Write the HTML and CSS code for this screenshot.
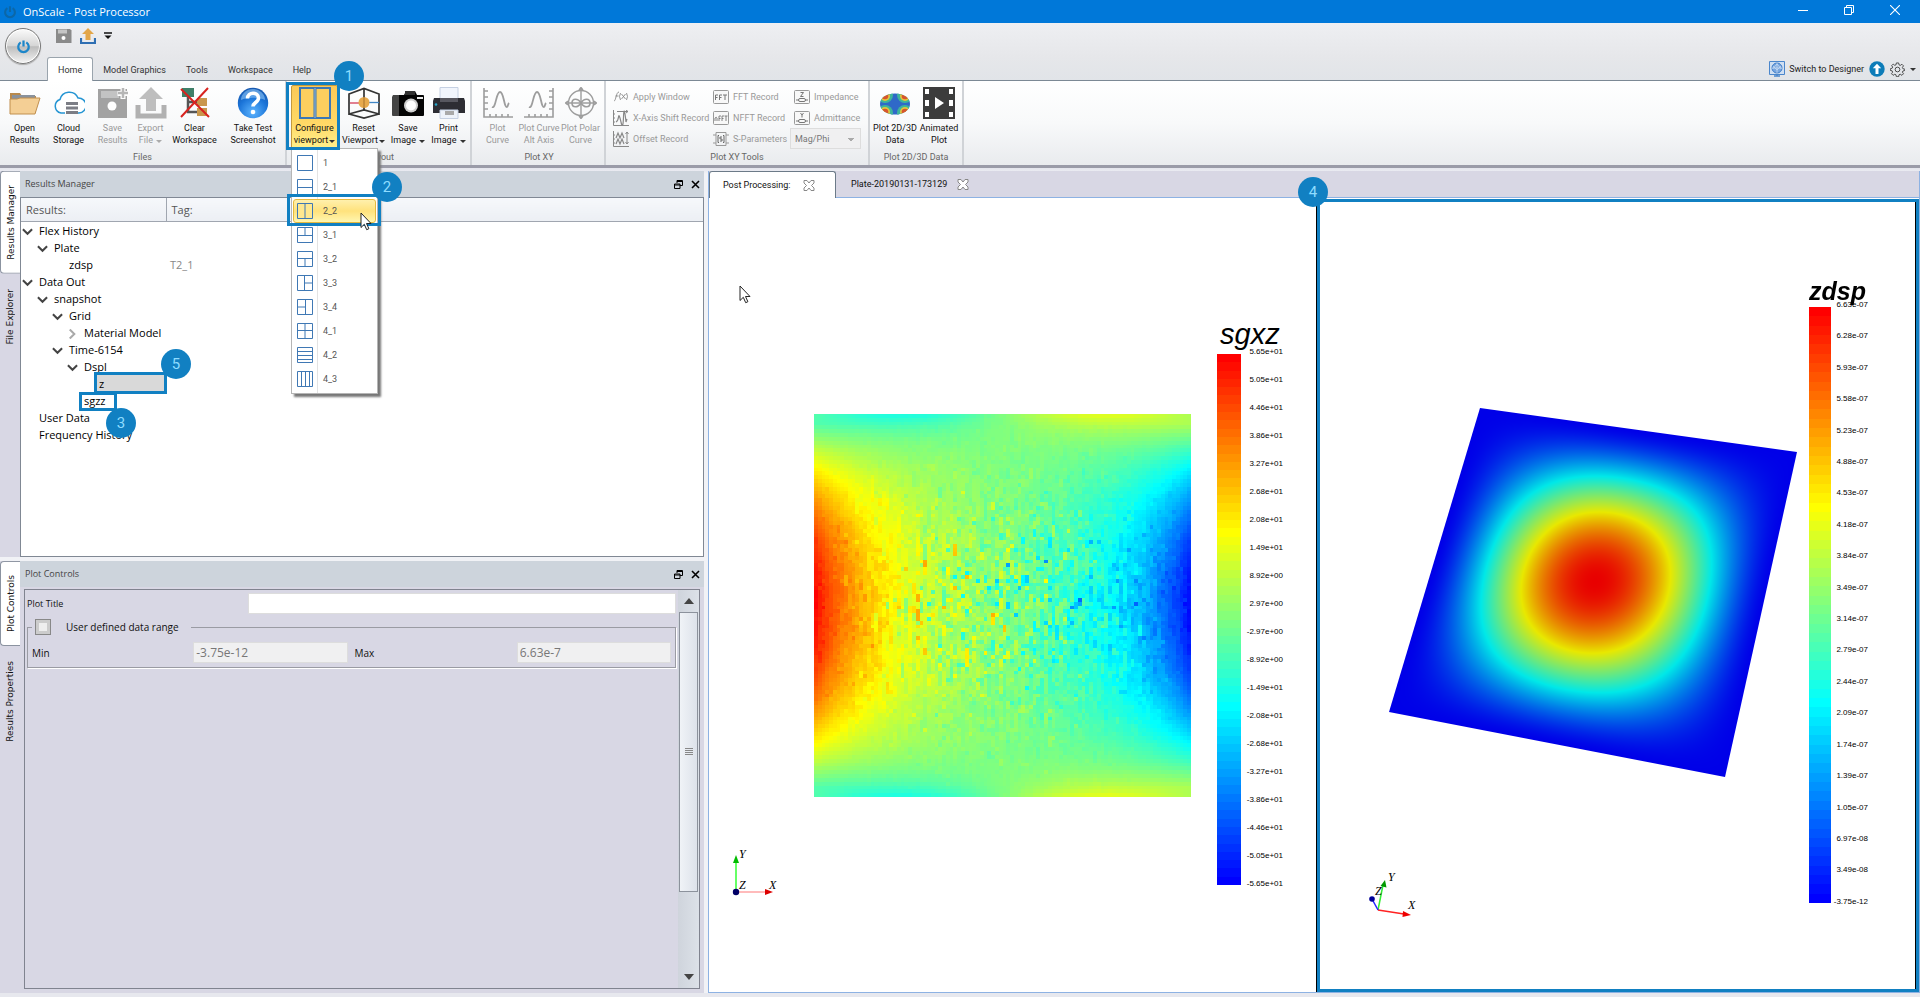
FILE: index.html
```html
<!DOCTYPE html>
<html lang="en">
<head>
<meta charset="utf-8">
<title>OnScale - Post Processor</title>
<link rel="stylesheet" href="styles.css">
</head>
<body>
<svg class="defs" aria-hidden="true">
  <defs>
    <symbol id="power" viewBox="0 0 16 16"><path d="M5 3.6a5.6 5.6 0 1 0 6 0M8 1.5v6.5" fill="none" stroke="currentColor" stroke-width="2.4"/></symbol>
    <symbol id="chev" viewBox="0 0 12 8"><path d="M1 1l5 5 5-5" fill="none" stroke="currentColor" stroke-width="2.2"/></symbol>
    <symbol id="float" viewBox="0 0 9 9"><path d="M3 3V.5h5.500v5H6M3 1.500h5.500M.5 4h5.500v4.500H.5zM.5 5h5.500" fill="none" stroke="#000"/></symbol>
    <symbol id="cross" viewBox="0 0 9 9"><path d="M1 1l7 7M8 1L1 8" fill="none" stroke="#000" stroke-width="1.6"/></symbol>
    <symbol id="tabx" viewBox="0 0 12 11"><path d="M1 .5h3l2 2.500L8 .5h3v2.500L8.500 5.500 11 8v2.500H8L6 8l-2 2.500H1V8l2.500-2.500L1 3z" fill="#fff" stroke="#888"/></symbol>
    <symbol id="pointer" viewBox="0 0 12 19"><path d="M1 1v14.500l3.300-3.200 2.400 5.400 2.200-1-2.400-5.200H11z" fill="#fff" stroke="#222"/></symbol>
  </defs>
</svg>

<header class="titlebar">
  <svg class="app-glyph" width="14" height="14"><use href="#power"/></svg>
  <h1>OnScale - Post Processor</h1>
  <button class="win" aria-label="Minimize"><svg width="10" height="10" viewBox="0 0 10 10"><path d="M0 5.500h10" stroke="#fff"/></svg></button>
  <button class="win" aria-label="Restore"><svg width="10" height="10" viewBox="0 0 10 10"><path d="M.5 2.500h7v7h-7zM2.500 2.500v-2h7v7h-2" fill="none" stroke="#fff"/></svg></button>
  <button class="win" aria-label="Close"><svg width="10" height="10" viewBox="0 0 10 10"><path d="M0 0l10 10M10 0L0 10" stroke="#fff" stroke-width="1.100"/></svg></button>
</header>

<div class="topbar">
  <button class="orb" aria-label="Application menu"><svg width="15" height="15"><use href="#power"/></svg></button>
  <div class="topbar-main">
    <div class="quick">
      <button aria-label="Save"><svg width="16" height="16" viewBox="0 0 16 16"><path d="M0 1h14l1.500 1.500V15H0z" fill="#8a8a8a"/><path d="M2 1.500h9v4H2z" fill="#c5c5c5"/><circle cx="7.500" cy="10" r="2" fill="#fff"/></svg></button>
      <button aria-label="Export"><svg width="16" height="16" viewBox="0 0 16 16"><path d="M1 10v5h14v-5" fill="none" stroke="#2f6fb3" stroke-width="2.200"/><path d="M8 0l6 6h-3.500v6h-5V6H2z" fill="#e3a648"/></svg></button>
      <button aria-label="Customize"><svg width="8" height="8" viewBox="0 0 8 8"><path d="M0 1h8" stroke="#111" stroke-width="1.500"/><path d="M.5 3.500h7L4 7z" fill="#111"/></svg></button>
    </div>
    <nav class="tabs">
      <button class="tab on">Home</button><button class="tab">Model Graphics</button><button class="tab">Tools</button><button class="tab">Workspace</button><button class="tab">Help</button>
      <div class="tools-right">
        <button class="switch"><svg width="16" height="16" viewBox="0 0 16 16"><path d="M.5.5h15v13H.5z" fill="#cfdff2" stroke="#4a86cc"/><circle cx="8" cy="7" r="5" fill="#78a6df" stroke="#3d7cc8"/><path d="M4 5l4 4 4-4M3.500 8L8 3l4.500 5M8 2v10M3 7h10" stroke="#cfe0f5" stroke-width=".7" fill="none"/><path d="M5 15h6M8 13v2" stroke="#4a86cc" stroke-width="1.500"/></svg><span>Switch to Designer</span></button>
        <button aria-label="Update"><svg width="16" height="16" viewBox="0 0 16 16"><circle cx="8" cy="8" r="7.700" fill="#0d7cb8"/><path d="M8 2.800l4.200 4.500H9.500V13h-3V7.300H3.800z" fill="#fff"/></svg></button>
        <button class="gear" aria-label="Settings"><svg width="15" height="15" viewBox="0 0 16 16"><path d="M6.800 1h2.400l.4 2 1.400.6 1.700-1.200 1.700 1.700-1.200 1.700.6 1.400 2 .4v1.400l-2 .6-.6 1.200 1.200 1.700-1.700 1.700-1.700-1.100-1.400.5-.4 2.100H6.800l-.4-2-1.400-.6-1.700 1.100-1.700-1.700 1.200-1.700-.6-1.400-1.900-.4V7.200l2-.6.6-1.200L1.700 3.900l1.700-1.700L5 3.500 6.400 3z" fill="none" stroke="#444"/><circle cx="8" cy="8" r="2.500" fill="none" stroke="#444"/></svg><i class="caret"></i></button>
      </div>
    </nav>
  </div>
</div>

<section class="ribbon">
  <div class="group">
    <div class="buttons">
      <button class="big w45"><svg width="32" height="32" viewBox="0 0 32 32"><path d="M1 6h10l2 3h14v17H1z" fill="#b98a4c"/><path d="M3 8h23v8H3z" fill="#8a929c"/><path d="M1 27V12h7l3-1h20l-5 16z" fill="#f4cf95" stroke="#c08f4f"/></svg><span>Open<br>Results</span></button>
      <button class="big w43"><svg width="32" height="32" viewBox="0 0 32 32"><path d="M12 26H8a7 7 0 0 1-1-13.500A9.500 9.500 0 0 1 25 11a7.500 7.500 0 0 1 1 15h-1" fill="#fff" stroke="#2595d3" stroke-width="1.500"/><path d="M13 15h12v3H13zM13 19.500h12v3H13zM13 24h12v3H13z" fill="#7b7d85"/></svg><span>Cloud<br>Storage</span></button>
      <button class="big w45 off"><svg width="32" height="32" viewBox="0 0 32 32"><path d="M1 2h29v29H1z" fill="#939393"/><path d="M4 4h18v7H4z" fill="#b9b9b9"/><circle cx="15" cy="19" r="4.500" fill="#fff"/><path d="M26 1v11M20.500 6.500h11" stroke="#fff" stroke-width="5"/><path d="M26 1v10M21 6h10" stroke="#aaa" stroke-width="2.500"/></svg><span>Save<br>Results</span></button>
      <button class="big w31 off"><svg width="32" height="32" viewBox="0 0 32 32"><path d="M3 18v11h26V18" fill="none" stroke="#a5a5a5" stroke-width="5"/><path d="M16 0l12 12h-7v12H11V12H4z" fill="#b4b4b4"/></svg><span>Export<br>File <i class="caret"></i></span></button>
      <button class="big w57"><svg width="32" height="32" viewBox="0 0 32 32"><path d="M9 6v19h12M9 15h10" fill="none" stroke="#555" stroke-width="2.500"/><path d="M3 1h12v9H3z" fill="#3f7f68"/><path d="M18 11h10v8H18zM18 21h10v8H18z" fill="#c9974c"/><path d="M2 2l28 28M29 1L2 30" stroke="#d8231f" stroke-width="2"/></svg><span>Clear<br>Workspace</span></button>
      <button class="big w60"><svg width="32" height="32" viewBox="0 0 32 32"><defs><radialGradient id="hb" cx=".5" cy=".8" r=".8"><stop offset="0" stop-color="#5cb4ff"/><stop offset=".6" stop-color="#1b74d8"/><stop offset="1" stop-color="#1657ad"/></radialGradient></defs><circle cx="16" cy="16" r="15.200" fill="url(#hb)"/><path d="M4 13a12 11 0 0 1 24 0c-6-3-18-3-24 0z" fill="#8cc4f7" opacity=".6"/><path d="M10.500 11.500c0-7 11-7 11-.5 0 4.500-5.500 4.500-5.500 8.500" fill="none" stroke="#fff" stroke-width="3.600"/><circle cx="16" cy="25" r="2.300" fill="#fff"/></svg><span>Take Test<br>Screenshot</span></button>
    </div>
    <h2>Files</h2>
  </div>

  <div class="group layout">
    <div class="buttons">
      <div class="menu-host">
        <button class="big w47 hot"><svg width="32" height="32" viewBox="0 0 32 32"><path d="M1 1h30v30H1z" fill="#fccf5f" stroke="#3c77b5" stroke-width="2"/><path d="M16 1v30" stroke="#3c77b5" stroke-width="3"/><path d="M16 1v30" stroke="#9dbbd0"/></svg><span>Configure<br>viewport<i class="caret"></i></span></button>
        <div class="frame frame-1"></div>
        <ul class="menu">
          <li><button><svg width="16" height="16" viewBox="0 0 16 16"><path d="M.5.5h15v15H.5z"/></svg>1</button></li>
          <li><button><svg width="16" height="16" viewBox="0 0 16 16"><path d="M.5.5h15v15H.5zM0 8.500h16"/></svg>2_1</button></li>
          <li class="picked"><button><svg width="16" height="16" viewBox="0 0 16 16"><path d="M.5.5h15v15H.5zM8 0v16"/></svg>2_2</button>
            <div class="frame frame-2"></div><span class="badge badge-2">2</span>
            <svg class="pointer-menu" width="12" height="19"><use href="#pointer"/></svg></li>
          <li><button><svg width="16" height="16" viewBox="0 0 16 16"><path d="M.5.5h15v15H.5zM0 8.500h16M8 0v8"/></svg>3_1</button></li>
          <li><button><svg width="16" height="16" viewBox="0 0 16 16"><path d="M.5.5h15v15H.5zM0 7.500h16M8 8v8"/></svg>3_2</button></li>
          <li><button><svg width="16" height="16" viewBox="0 0 16 16"><path d="M.5.5h15v15H.5zM7.500 0v16M8 8h8"/></svg>3_3</button></li>
          <li><button><svg width="16" height="16" viewBox="0 0 16 16"><path d="M.5.5h15v15H.5zM8.500 0v16M0 8h8"/></svg>3_4</button></li>
          <li><button><svg width="16" height="16" viewBox="0 0 16 16"><path d="M.5.5h15v15H.5zM8 0v16M0 7.500h16"/></svg>4_1</button></li>
          <li><button><svg width="16" height="16" viewBox="0 0 16 16"><path d="M.5.5h15v15H.5zM0 4.500h16M0 8.500h16M0 12.500h16"/></svg>4_2</button></li>
          <li><button><svg width="16" height="16" viewBox="0 0 16 16"><path d="M.5.5h15v15H.5zM4.500 0v16M8.500 0v16M12.500 0v16"/></svg>4_3</button></li>
        </ul>
        <span class="badge badge-1">1</span>
      </div>
      <button class="big w51"><svg width="32" height="32" viewBox="0 0 32 32"><path d="M1 7L16 1.500 31 7v20l-15-4-15 4zM1 27l15 4 15-4M16 1.500V23" fill="none" stroke="#333" stroke-width="1.700"/><path d="M2 16h9" stroke="#d33b55" stroke-width="1.300"/><path d="M21 15.500h10" stroke="#3f86c6" stroke-width="1.300"/><circle cx="16" cy="15.500" r="5.500" fill="#e7aa4e"/><path d="M16 10v11" stroke="#a5702a"/></svg><span>Reset<br>Viewport<i class="caret"></i></span></button>
      <button class="big w38"><svg width="32" height="32" viewBox="0 0 32 32"><path d="M1 8h6v21H1a1 1 0 0 1-1-1V10z" fill="#444"/><path d="M7 8h5l2-4h9l2 4h6a1 1 0 0 1 1 1v19a1 1 0 0 1-1 1H7z" fill="#050505"/><path d="M13 4h10v4H13z" fill="#333"/><path d="M25 10h6v2h-6z" fill="#eee"/><circle cx="19" cy="18.500" r="7" fill="#cfcfcf"/><circle cx="19" cy="18.500" r="5" fill="#fff"/></svg><span>Save<br>Image <i class="caret"></i></span></button>
      <button class="big w43"><svg width="32" height="32" viewBox="0 0 32 32"><path d="M7 .5h18V13H7z" fill="#f1f5fc" stroke="#c5d0e2"/><path d="M1 11h30l1 3v12H0V14z" fill="#2d2d33"/><path d="M7 11h18v4H7z" fill="#57575f"/><circle cx="3" cy="17.500" r="1.300" fill="#26a5c8"/><path d="M7 23h18v8.500H7z" fill="#edf2fa" stroke="#c5d0e2"/><path d="M12 24h9v4h-9z" fill="#a9a9a9"/></svg><span>Print<br>Image <i class="caret"></i></span></button>
    </div>
    <h2>Layout</h2>
  </div>

  <div class="group xy">
    <div class="buttons">
      <button class="big w43 off"><svg width="32" height="32" viewBox="0 0 32 32"><path d="M2 1v29h29M2 4h4M2 10h4M2 16h4M2 22h4M8 30v-3M14 30v-3M20 30v-3M26 30v-3" fill="none" stroke="#8d8d8d" stroke-width="1.600"/><path d="M10 20c4 2 4-15 8-15s4 16 7 15c1-.5 1-3 2-4" fill="none" stroke="#8d8d8d" stroke-width="1.800"/></svg><span>Plot<br>Curve</span></button>
      <button class="big w40 off"><svg width="32" height="32" viewBox="0 0 32 32"><path d="M30 1v29H1M30 4h-4M30 10h-4M30 16h-4M30 22h-4M24 30v-3M18 30v-3M12 30v-3M6 30v-3" fill="none" stroke="#8d8d8d" stroke-width="1.600"/><path d="M6 20c4 2 4-15 8-15s4 16 7 15c1-.5 1-3 2-4" fill="none" stroke="#8d8d8d" stroke-width="1.800"/></svg><span>Plot Curve<br>Alt Axis</span></button>
      <button class="big w43 off"><svg width="32" height="32" viewBox="0 0 32 32"><circle cx="16" cy="16" r="12.500" fill="none" stroke="#8d8d8d" stroke-width="1.400"/><path d="M16 1v30M1 16h30M14 3l2-2.500L18 3M14 29l2 2.500 2-2.500M3 14L.5 16 3 18M29 14l2.500 2-2.500 2" fill="none" stroke="#8d8d8d" stroke-width="1.400"/><path d="M16 16c-3-5-9-5-9 0s6 5 9 0 9-5 9 0-6 5-9 0z" fill="none" stroke="#8d8d8d" stroke-width="1.600"/></svg><span>Plot Polar<br>Curve</span></button>
    </div>
    <h2>Plot XY</h2>
  </div>

  <div class="group">
    <div class="small-grid">
      <button class="small"><svg width="16" height="16" viewBox="0 0 16 16"><path d="M1 12c2 0 2-9 5-9M2.500 7h3M7.500 4q-2 3.500 0 7M13.500 4q2 3.500 0 7M8.500 5l4 5M12.500 5l-4 5" fill="none" stroke="#888" stroke-width=".9"/></svg>Apply Window</button>
      <button class="small"><svg width="16" height="16" viewBox="0 0 16 16"><rect x=".5" y="1.500" width="15" height="13" rx="1" fill="#f8f8f8" stroke="#999"/><path d="M2.500 11V6h2.500M2.500 8.500h2M6.500 11V6H9M6.500 8.500h2M10 6h4M12 6v5" fill="none" stroke="#777"/></svg>FFT Record</button>
      <button class="small"><svg width="16" height="16" viewBox="0 0 16 16"><rect x=".5" y="1.500" width="15" height="13" rx="1" fill="#f8f8f8" stroke="#999"/><path d="M6.500 3.500h3l-3 4h3M2 11h3M11 11h3" fill="none" stroke="#777"/><rect x="4.500" y="9.500" width="7" height="3" rx="1.500" fill="none" stroke="#777"/></svg>Impedance</button>
      <button class="small"><svg width="16" height="16" viewBox="0 0 16 16"><path d="M.5 0v15.500H16M.5 4H2M.5 8H2M.5 12H2M4 1.500h11M13 0l2 1.500L13 3" fill="none" stroke="#888"/><path d="M3 12q2-1 2.500-5T8 12t2.500-5T13 12l1-3" fill="none" stroke="#888" stroke-width="1.200"/></svg>X-Axis Shift Record</button>
      <button class="small"><svg width="16" height="16" viewBox="0 0 16 16"><rect x=".5" y="1.500" width="15" height="13" rx="1" fill="#f8f8f8" stroke="#999"/><path d="M2 11V8q1.500-1.500 2 0v3M6 11V6h2M6 8.500h1.500M9 11V6h2M9 8.500h1.500M11.500 6h3M13 6v5" fill="none" stroke="#777" stroke-width=".9"/></svg>NFFT Record</button>
      <button class="small"><svg width="16" height="16" viewBox="0 0 16 16"><rect x=".5" y="1.500" width="15" height="13" rx="1" fill="#f8f8f8" stroke="#999"/><path d="M6.500 3l1.500 2 1.500-2M8 5v2.500M2 11h3M11 11h3" fill="none" stroke="#777"/><rect x="4.500" y="9.500" width="7" height="3" rx="1.500" fill="none" stroke="#777"/></svg>Admittance</button>
      <button class="small"><svg width="16" height="16" viewBox="0 0 16 16"><path d="M.5 0v15.500H16M.5 4H2M.5 8H2M.5 12H2M14 1v12M12.500 3L14 1l1.500 2M12.500 11l1.500 2 1.500-2" fill="none" stroke="#888"/><path d="M3 7l2-5 2 5 2-5 2 5M3 13l2-5 2 5 2-5 2 5" fill="none" stroke="#888" stroke-width="1.200"/></svg>Offset Record</button>
      <button class="small"><svg width="16" height="16" viewBox="0 0 16 16"><path d="M3 1.500h10v13H3zM0 4h3M0 12h3M13 4h3M13 12h3" fill="none" stroke="#999"/><path d="M6 4.500H5v7h1M10 4.500h1v7h-1M9 6H7v2h2v2H7" fill="none" stroke="#666"/></svg>S-Parameters</button>
      <select class="mag" disabled aria-label="Output format"><option>Mag/Phi</option></select>
    </div>
    <h2>Plot XY Tools</h2>
  </div>

  <div class="group last">
    <div class="buttons">
      <button class="big w46"><svg width="32" height="32" viewBox="0 0 32 32"><clipPath id="ov"><ellipse cx="16" cy="17" rx="15" ry="10.500"/></clipPath><g clip-path="url(#ov)"><path d="M0 5h32v24H0z" fill="#2f69c8"/><g fill="#3fb59b"><circle cx="6" cy="8" r="8"/><circle cx="26" cy="8" r="8"/><circle cx="6" cy="26" r="8"/><circle cx="26" cy="26" r="8"/></g><g fill="#e2c53c"><circle cx="6" cy="9" r="5"/><circle cx="26" cy="9" r="5"/><circle cx="6" cy="25" r="5"/><circle cx="26" cy="25" r="5"/></g><g fill="#d8542f"><circle cx="6" cy="9" r="3.300"/><circle cx="26" cy="9" r="3.300"/><circle cx="6" cy="25" r="3.300"/><circle cx="26" cy="25" r="3.300"/></g></g></svg><span>Plot 2D/3D<br>Data</span></button>
      <button class="big w42"><svg width="32" height="32" viewBox="0 0 32 32"><path d="M0 0h32v32H0z" fill="#3c3c3c"/><path d="M2 2h4v5H2zM2 13h4v6H2zM2 25h4v5H2zM26 2h4v5h-4zM26 13h4v6h-4zM26 25h4v5h-4zM12 10l9 6-9 6z" fill="#fff"/></svg><span>Animated<br>Plot</span></button>
    </div>
    <h2>Plot 2D/3D Data</h2>
  </div>
</section>

<main class="work">
  <div class="left">
    <section class="dock results">
      <nav class="side"><button class="vtab on">Results Manager</button><button class="vtab">File Explorer</button></nav>
      <div class="pane">
        <header class="pane-head"><h2>Results Manager</h2><button aria-label="Float"><svg width="9" height="9"><use href="#float"/></svg></button><button aria-label="Close"><svg width="9" height="9"><use href="#cross"/></svg></button></header>
        <div class="tree-box">
          <table class="tree">
            <thead><tr><th class="c-res">Results:</th><th>Tag:</th></tr></thead>
            <tbody>
              <tr><td class="l0"><svg class="tw" width="11" height="8"><use href="#chev"/></svg>Flex History</td><td></td></tr>
              <tr><td class="l1"><svg class="tw" width="11" height="8"><use href="#chev"/></svg>Plate</td><td></td></tr>
              <tr><td class="l2 leaf">zdsp</td><td class="tag">T2_1</td></tr>
              <tr><td class="l0"><svg class="tw" width="11" height="8"><use href="#chev"/></svg>Data Out</td><td></td></tr>
              <tr><td class="l1"><svg class="tw" width="11" height="8"><use href="#chev"/></svg>snapshot</td><td></td></tr>
              <tr><td class="l2"><svg class="tw" width="11" height="8"><use href="#chev"/></svg>Grid</td><td></td></tr>
              <tr><td class="l3"><svg class="tw shut" width="11" height="8"><use href="#chev"/></svg>Material Model</td><td></td></tr>
              <tr><td class="l2"><svg class="tw" width="11" height="8"><use href="#chev"/></svg>Time-6154</td><td></td></tr>
              <tr><td class="l3"><svg class="tw" width="11" height="8"><use href="#chev"/></svg>Dspl</td><td></td></tr>
              <tr><td class="l4 leaf"><div class="frame frame-5"></div><span class="over">z</span><span class="badge badge-5">5</span></td><td></td></tr>
              <tr><td class="l3 leaf"><div class="frame frame-3"></div><span class="over">sgzz</span><span class="badge badge-3">3</span></td><td></td></tr>
              <tr><td class="l0 leaf">User Data</td><td></td></tr>
              <tr><td class="l0 leaf">Frequency History</td><td></td></tr>
            </tbody>
          </table>
        </div>
      </div>
    </section>

    <section class="dock controls">
      <nav class="side"><button class="vtab on">Plot Controls</button><button class="vtab">Results Properties</button></nav>
      <div class="pane">
        <header class="pane-head"><h2>Plot Controls</h2><button aria-label="Float"><svg width="9" height="9"><use href="#float"/></svg></button><button aria-label="Close"><svg width="9" height="9"><use href="#cross"/></svg></button></header>
        <div class="form-box">
          <form class="form">
            <div class="title-row"><label for="ptitle">Plot Title</label><input id="ptitle" type="text"></div>
            <fieldset>
              <legend><input id="udr" type="checkbox"><label for="udr">User defined data range</label></legend>
              <div class="range"><label for="mn">Min</label><input id="mn" disabled value="-3.75e-12"><label for="mx">Max</label><input id="mx" disabled value="6.63e-7"></div>
            </fieldset>
          </form>
          <div class="scroll">
            <svg width="10" height="6" viewBox="0 0 10 6"><path d="M0 6l5-6 5 6z" fill="#444"/></svg>
            <div class="track"><div class="thumb"><i></i></div></div>
            <svg width="10" height="6" viewBox="0 0 10 6"><path d="M0 0l5 6 5-6z" fill="#444"/></svg>
          </div>
        </div>
      </div>
    </section>
  </div>

  <section class="docs">
    <nav class="doc-tabs">
      <button class="doc on">Post Processing:<svg width="12" height="11"><use href="#tabx"/></svg></button>
      <button class="doc">Plate-20190131-173129<svg width="12" height="11"><use href="#tabx"/></svg></button>
    </nav>
    <div class="views">
      <div class="view">
        <svg class="pointer-view" width="12" height="19"><use href="#pointer"/></svg>
        <canvas class="heat" id="heat" width="100" height="100"></canvas>
        <div class="scale scale-1">
          <h3>sgxz</h3>
          <canvas class="bar" width="1" height="64"></canvas>
          <ol><li>5.65e+01</li><li>5.05e+01</li><li>4.46e+01</li><li>3.86e+01</li><li>3.27e+01</li><li>2.68e+01</li><li>2.08e+01</li><li>1.49e+01</li><li>8.92e+00</li><li>2.97e+00</li><li>-2.97e+00</li><li>-8.92e+00</li><li>-1.49e+01</li><li>-2.08e+01</li><li>-2.68e+01</li><li>-3.27e+01</li><li>-3.86e+01</li><li>-4.46e+01</li><li>-5.05e+01</li><li>-5.65e+01</li></ol>
        </div>
        <svg class="triad triad-1" width="60" height="60" viewBox="0 0 60 60">
          <path d="M10 46V16" stroke="#3f3" stroke-width="1.500"/><path d="M7 17l3-8 3 8z" fill="#0b0"/>
          <path d="M10 46h30" stroke="#fbb" stroke-width="2"/><path d="M39 43l8 3-8 3z" fill="#d00"/><circle cx="10" cy="46" r="3.200" fill="#006"/>
          <text x="13" y="12">Y</text><text x="13" y="43">Z</text><text x="43" y="43">X</text>
        </svg>
      </div>
      <div class="view active">
        <canvas class="plate" id="plate" width="409" height="370"></canvas>
        <div class="scale scale-2">
          <h3>zdsp</h3>
          <canvas class="bar" width="1" height="64"></canvas>
          <ol><li>6.63e-07</li><li>6.28e-07</li><li>5.93e-07</li><li>5.58e-07</li><li>5.23e-07</li><li>4.88e-07</li><li>4.53e-07</li><li>4.18e-07</li><li>3.84e-07</li><li>3.49e-07</li><li>3.14e-07</li><li>2.79e-07</li><li>2.44e-07</li><li>2.09e-07</li><li>1.74e-07</li><li>1.39e-07</li><li>1.05e-07</li><li>6.97e-08</li><li>3.49e-08</li><li>-3.75e-12</li></ol>
        </div>
        <svg class="triad triad-2" width="60" height="60" viewBox="0 0 60 60">
          <path d="M13 40l5-25" stroke="#3e3" stroke-width="1.500"/><path d="M15.500 16L20 10l1.500 7.500z" fill="#090"/>
          <path d="M13 40l26 4" stroke="#f22" stroke-width="1.500"/><path d="M38 41l8 4-8.500 2z" fill="#e00"/>
          <path d="M13 40L7 29" stroke="#22f" stroke-width="1.500"/><circle cx="7" cy="29" r="2.800" fill="#009"/>
          <text x="10" y="25">Z</text><text x="23" y="11">Y</text><text x="43" y="39">X</text>
        </svg>
        <div class="frame frame-4"></div><span class="badge badge-4">4</span>
      </div>
    </div>
  </section>
</main>
<script src="plots.js"></script>
</body>
</html>
```
FILE: styles.css
```css
* { box-sizing: border-box; }
html, body { height: 100%; margin: 0; }
body {
  display: flex; flex-direction: column; overflow: hidden;
  font-family: Roboto, "Liberation Sans", sans-serif; font-size: 9px; line-height: 12px; color: #111;
  background: #e7e8ee;
}
.defs { position: absolute; width: 0; height: 0; }
button { font: inherit; color: inherit; background: none; border: 0; padding: 0; margin: 0; }
h1, h2, h3, ol, ul { margin: 0; padding: 0; font-weight: normal; list-style: none; }
svg { display: block; flex: none; }

.titlebar { display: flex; align-items: center; height: 23px; flex: none; background: #0078d9; color: #fff; padding-left: 3px; }
.app-glyph { color: #0b67a8; }
.titlebar h1 { flex: 1; padding-left: 6px; font: 11px/16px "Open Sans", sans-serif; }
.win { width: 46px; height: 23px; display: grid; place-items: center; padding-right: 4px; padding-bottom: 3px; }

.topbar { display: flex; flex: none; height: 58px; background: linear-gradient(#eeeff2, #e6e7ea 60%, #e1e4e8); border-bottom: 1px solid #7c8995; }
.orb {
  width: 36px; height: 36px; margin: 5px 6px 0 5px; border-radius: 50%; border: 1px solid #777;
  display: grid; place-items: center; color: #1d86c9;
  background: linear-gradient(#fbfbfb, #d5d5d5 50%, #bcbcbc 52%, #f4f4f4); box-shadow: inset 0 0 0 1px #fff, 0 1px 1px #aaa;
}
.topbar-main { flex: 1; display: flex; flex-direction: column; justify-content: space-between; }
.quick { display: flex; gap: 8px; align-items: center; padding: 5px 0 0 9px; }
.tabs { display: flex; align-items: flex-end; height: 24px; margin-bottom: -1px; }
.tab { height: 24px; padding: 0 9px; color: #333; font: 9px/22px Roboto, sans-serif; border: 1px solid transparent; border-bottom: 0; }
.tab.on { padding: 0 10px; background: #fff; border-color: #9aa4ad; border-radius: 3px 3px 0 0; }
.tools-right { margin-left: auto; display: flex; align-items: center; gap: 5px; height: 24px; padding-right: 4px; color: #222; }
.switch, .gear { display: flex; align-items: center; gap: 4px; }
.caret { display: inline-block; border: 3px solid transparent; border-top-color: #333; border-bottom: 0; margin-left: 1px; }

.ribbon { display: flex; flex: none; height: 87px; background: linear-gradient(#fff, #f8f9fa 50%, #e9ebee); border-bottom: 3px solid #9a9ba8; }
.group { display: flex; flex-direction: column; justify-content: space-between; border-right: 2px solid #d0d3d7; padding: 4px 2px 2px; }
.group.layout { padding-left: 4px; padding-right: 0; }
.group.xy { padding-left: 4px; }
.group h2 { text-align: center; color: #666; font-size: 9px; }
.buttons { display: flex; height: 64px; }
.big { display: flex; flex-direction: column; align-items: center; gap: 3px; height: 64px; padding-top: 2px; text-align: center; white-space: nowrap; }
.off, .small { color: #999; }
.off svg { opacity: .85; }
.off .caret { border-top-color: #aaa; }
.w31 { width: 31px; } .w38 { width: 38px; } .w40 { width: 40px; } .w42 { width: 42px; } .w43 { width: 43px; }
.w45 { width: 45px; } .w46 { width: 46px; } .w47 { width: 47px; } .w51 { width: 51px; } .w57 { width: 57px; } .w60 { width: 60px; }
.hot { background: linear-gradient(#fbc957, #ffd966 60%, #fff08c); border: 1px solid #c59a3c; border-radius: 2px; padding-top: 1px; }
.menu-host { position: relative; z-index: 5; }

.menu { position: absolute; left: 0; top: 63px; width: 87px; padding: 2px 1px; border: 1px solid #b5b5b5; background: linear-gradient(90deg, #fff 25px, #e3e3e3 25px, #e3e3e3 26px, #fff 26px); box-shadow: 3px 3px 2px #777; }
.menu li { position: relative; height: 24px; }
.menu button { display: flex; align-items: center; gap: 10px; width: 100%; height: 24px; padding-left: 3px; color: #555; font-size: 9px; border: 1px solid transparent; border-radius: 3px; }
.menu svg path { fill: #fff; stroke: #3f78b4; }
.menu .picked button { border-color: #e6b93c; background: linear-gradient(#fff0ad, #ffe27c 50%, #fff6b0); }
.menu .picked button path { fill: #ffe88f; }
.menu .pointer-menu { position: absolute; left: 67px; top: 13px; z-index: 3; }

.small-grid { display: grid; grid-template-columns: 100px 81px 74px; grid-auto-rows: 21px; padding: 1px 0 0 5px; width: 258px; height: 66px; }
.small { display: flex; align-items: center; gap: 4px; white-space: nowrap; }
.mag { appearance: none; margin-left: -4px; width: 71px; height: 21px; padding: 0 4px; border: 1px solid #ddd; border-radius: 0; color: #777; opacity: 1; font: inherit; background: linear-gradient(#aaa, #aaa) 57px 9px / 6px 1px no-repeat, linear-gradient(#aaa, #aaa) 58px 10px / 4px 1px no-repeat, linear-gradient(#aaa, #aaa) 59px 11px / 2px 1px no-repeat, #f0f0f1; }

.frame { position: absolute; border: 3px solid #1180c2; pointer-events: none; }
.badge { position: absolute; z-index: 4; width: 30px; height: 30px; border-radius: 50%; background: #1180c2; color: #8edcff; text-align: center; font: 15px/30px Roboto, sans-serif; }
.frame-1 { left: -5px; top: -3px; width: 54px; height: 68px; z-index: 2; }
.badge-1 { left: 43px; top: -24px; }
.frame-2 { left: -6px; top: -5px; width: 94px; height: 32px; }
.badge-2 { left: 79px; top: -27px; }
.frame-5 { left: 73px; top: -3px; width: 73px; height: 22px; background: #d9d9d9; }
.badge-5 { left: 140px; top: -26px; }
.frame-3 { left: 58px; top: 0; width: 38px; height: 19px; background: #fff; }
.badge-3 { left: 85px; top: 16px; }
.frame-4 { inset: 0; }
.badge-4 { left: -19px; top: -22px; }

.work { flex: 1; min-height: 0; display: grid; grid-template-columns: minmax(0, 704px) minmax(0, 1fr); gap: 4px; padding: 3px 0 0; background: linear-gradient(#e3e4ec, #f1f2f6 6px); border-bottom: 4px solid #e7e8ee; }
.left { display: flex; flex-direction: column; gap: 4px; min-height: 0; }
.dock { display: flex; min-height: 0; background: #d8d7e4; }
.results { flex: 386 1 0; }
.controls { flex: 432 1 0; }
.side { width: 20px; flex: none; display: flex; flex-direction: column; }
.vtab { writing-mode: vertical-rl; transform: rotate(180deg); width: 20px; padding: 14px 0; text-align: center; font: 9px/18px "DejaVu Sans", sans-serif; border: 1px solid transparent; }
.vtab.on { padding: 13px 0; background: #fff; border-color: #8b93a0; border-left: 0; border-radius: 0 4px 4px 0; }
.pane { flex: 1; min-width: 0; display: flex; flex-direction: column; }
.pane-head { display: flex; align-items: center; gap: 8px; height: 26px; flex: none; padding: 0 4px 0 5px; background: #cdd4dc; color: #444; }
.pane-head h2 { flex: 1; font: 9px/12px "Open Sans", sans-serif; }
.tree-box { flex: 1; min-height: 0; background: #fff; border: 1px solid #808894; }

.tree { width: 100%; border-collapse: collapse; table-layout: fixed; font: 11px/17px "Open Sans", sans-serif; color: #000; }
.tree th { height: 23px; padding: 0 5px; text-align: left; font-weight: normal; color: #555; background: linear-gradient(#f6f8fb, #eceff4); border-bottom: 1px solid #a0a6b0; }
.tree .c-res { width: 145px; border-right: 1px solid #a0a6b0; }
.tree td { height: 17px; padding: 0; white-space: nowrap; position: relative; }
.tree .tag { padding-left: 4px; color: #888; }
.tw { display: inline-block; vertical-align: middle; margin-right: 6px; color: #444; }
.shut { transform: rotate(-90deg); color: #aaa; }
.tree .l0 { padding-left: 1px; } .tree .l1 { padding-left: 16px; } .tree .l2 { padding-left: 31px; } .tree .l3 { padding-left: 46px; } .tree .l4 { padding-left: 61px; }
.leaf::before { content: ""; display: inline-block; width: 17px; }
.over { position: relative; }

.form-box { flex: 1; min-height: 0; display: flex; margin: 2px 4px 4px 4px; border: 1px solid #80838f; }
.form { flex: 1; min-width: 0; padding: 3px 2px; }
.form label { color: #111; font: 9px/12px "Open Sans", sans-serif; }
.form input { min-width: 0; border-radius: 0; }
.title-row { display: grid; grid-template-columns: 221px 1fr; align-items: center; }
.title-row input { height: 21px; margin: 0; border: 1px solid #ddd; background: #fff; }
fieldset { margin: 5px 0 0; padding: 0; border: 1px solid #9a9ba3; box-shadow: 1px 1px 0 #fff; min-width: 0; }
legend { display: flex; align-items: center; gap: 15px; margin-left: 4px; padding: 0 12px 0 3px; }
legend input { appearance: none; width: 16px; height: 16px; margin: 0; border: 1px solid #888; background: #eee; box-shadow: inset 0 0 0 3px #ccc; }
.form legend label, .form .range label { font: 10px/16px "Open Sans", sans-serif; }
.range { display: grid; grid-template-columns: 162fr 155fr 168fr 154fr; align-items: center; padding: 7px 4px 4px 3px; }
.range label { padding-left: 1px; }
.range label + input + label { padding-left: 6px; }
.range input { height: 21px; width: 100%; border: 1px solid #ddd; background: #f0f0f1; color: #777; font: 12px/16px "Open Sans", sans-serif; padding: 0 2px; }
.scroll { width: 21px; flex: none; display: flex; flex-direction: column; align-items: center; padding: 8px 1px; background: linear-gradient(90deg, #cfd4dc, #dce1e8); gap: 8px; }
.track { flex: 1; align-self: stretch; }
.thumb { height: 79%; border: 1px solid #8c929c; background: linear-gradient(90deg, #f0f3f7, #dde2ea); display: grid; place-items: center; }
.thumb i { width: 8px; height: 7px; background: repeating-linear-gradient(#888 0 1px, transparent 1px 2px); }

.docs { display: flex; flex-direction: column; min-width: 0; min-height: 0; border: 1px solid #8db2e3; border-top: 0; background: #fff; }
.doc-tabs { display: flex; height: 27px; flex: none; background: #d8d7e4; border-bottom: 1px solid #8db2e3; }
.doc { display: flex; align-items: center; gap: 10px; height: 26px; padding: 0 15px; font: 9px/12px Roboto, sans-serif; color: #111; }
.doc.on { height: 27px; background: #fff; border: 1px solid #6c7a88; border-bottom: 0; border-radius: 3px 3px 0 0; width: 127px; padding: 0 13px; gap: 12px; }
.views { flex: 1; min-height: 0; display: flex; padding: 1px 0 0; }
.view { position: relative; flex: 608 1 0; min-width: 0; }
.view.active { flex-grow: 602; background: #fff; box-shadow: -1px 0 0 #000, inset -4px 0 0 #000; }
.pointer-view { position: absolute; left: 30px; top: 86px; }
.heat { position: absolute; left: 105px; top: 215px; width: 377px; height: 383px; image-rendering: pixelated; }
.plate { position: absolute; left: 72px; top: 209px; }
.scale { position: absolute; display: grid; grid-template: 100% / 24px 42px; }
.scale h3 { position: absolute; left: 3px; top: -35px; font: italic 29px/30px "Liberation Sans", sans-serif; color: #000; z-index: 1; }
.scale .bar { width: 100%; height: 100%; min-height: 0; image-rendering: pixelated; }
.scale ol { display: flex; flex-direction: column; justify-content: space-between; text-align: right; font: 8px/8px "Liberation Sans", sans-serif; color: #000; margin: -6px 0 -3px; }
.scale-1 { left: 508px; top: 155px; height: 531px; }
.scale-2 { left: 492px; top: 108px; height: 596px; grid-template-columns: 22px 37px; }
.scale-2 h3 { left: 0; top: -31px; font-size: 25px; font-weight: bold; }
.triad { position: absolute; font: italic 12px "Liberation Serif", serif; }
.triad-1 { left: 17px; top: 647px; }
.triad-2 { left: 48px; top: 671px; }
```
FILE: plots.js
```js
// Colour map: blue, cyan, yellow, red at equal steps; t runs from 0 to 1.
function ramp(t) {
  t = Math.min(1, Math.max(0, t)) * 3;
  if (t < 1) return [0, 255 * t, 255];
  if (t < 2) return [255 * (t - 1), 255, 255 * (2 - t)];
  return [255, 255 * (3 - t), 0];
}

function fill(canvas, colorAt) {
  const ctx = canvas.getContext('2d');
  const img = ctx.createImageData(canvas.width, canvas.height);
  for (let y = 0, i = 0; y < canvas.height; y++) {
    for (let x = 0; x < canvas.width; x++, i += 4) {
      const c = colorAt(x, y);
      img.data[i] = c[0]; img.data[i + 1] = c[1]; img.data[i + 2] = c[2]; img.data[i + 3] = 255;
    }
  }
  ctx.putImageData(img, 0, 0);
  return ctx;
}

document.querySelectorAll('.bar').forEach(c => fill(c, (x, y) => ramp(1 - y / 63)));

// Shear stress on a 100 x 100 grid with solver noise in the middle.
let seed = 91733;
const rnd = () => (seed = (seed * 16807) % 2147483647) / 2147483647;
const last = new Array(100).fill(0);
fill(document.getElementById('heat'), (i, j) => {
  const x = (i + .5) / 100, y = (j + .5) / 100, t = 2 * y - 1;
  const s = Math.max(-.12, 1 - 1.25 * t * t);
  let v = s * (Math.exp(-x / .21) - Math.exp(-(1 - x) / .21));
  const edge = Math.min(y, 1 - y);
  v -= .24 * Math.sin(2 * Math.PI * x) * Math.exp(-edge / .04);
  if (rnd() > .3) last[i] = (rnd() + rnd() + rnd() - 1.5) * (rnd() < .25 ? 1.3 : .55);
  const amp = .42 * Math.exp(-((x - .5) ** 2 / .12 + (y - .5) ** 2 / .075));
  return ramp((v + last[i] * amp + 1) / 2);
});

// Displacement of a clamped square plate seen in perspective.
const quad = [[91, 0], [408, 44], [336, 369], [0, 304]];
const [[x0, y0], [x1, y1], [x2, y2], [x3, y3]] = quad;
const dx1 = x1 - x2, dx2 = x3 - x2, dy1 = y1 - y2, dy2 = y3 - y2;
const sx = x0 - x1 + x2 - x3, sy = y0 - y1 + y2 - y3;
const det = dx1 * dy2 - dx2 * dy1;
const g = (sx * dy2 - dx2 * sy) / det, h = (dx1 * sy - sx * dy1) / det;
const a = x1 - x0 + g * x1, b = x3 - x0 + h * x3, d = y1 - y0 + g * y1, e = y3 - y0 + h * y3;
const ctx = fill(document.getElementById('plate'), (x, y) => {
  const A = a - g * x, B = b - h * x, C = x - x0;
  const D = d - g * y, E = e - h * y, F = y - y0;
  const q = A * E - B * D;
  const u = (C * E - B * F) / q, v = (A * F - C * D) / q;
  const w = (1 - Math.cos(2 * Math.PI * u)) * (1 - Math.cos(2 * Math.PI * v)) / 4;
  return ramp(Math.pow(w, .77)).map(k => k * .91);
});
ctx.globalCompositeOperation = 'destination-in';
ctx.beginPath();
quad.forEach(p => ctx.lineTo(p[0], p[1]));
ctx.fill();
```
